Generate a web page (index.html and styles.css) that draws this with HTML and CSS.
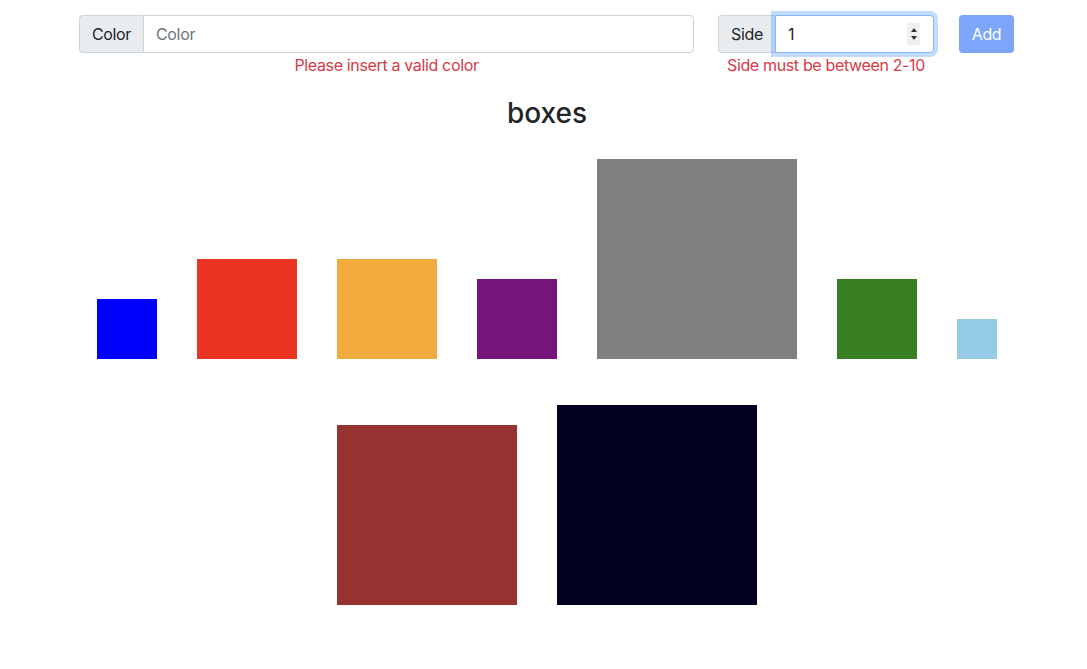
FILE: index.html
```html
<!DOCTYPE html>
<html lang="en">
<head>
<meta charset="utf-8">
<title>boxes</title>
<link rel="stylesheet" href="styles.css">
</head>
<body>
<form class="form">
  <div class="field field-color">
    <div class="input-group">
      <span class="addon">Color</span>
      <input class="control" type="text" placeholder="Color">
    </div>
    <div class="feedback">Please insert a valid color</div>
  </div>
  <div class="field field-side">
    <div class="input-group">
      <span class="addon">Side</span>
      <div class="control-wrap">
        <input class="control control-focus" type="text" value="1">
        <span class="spinner">
          <svg width="12" height="22" viewBox="0 0 12 22"><path d="M3 9 L6 5 L9 9 Z" fill="#333"/><path d="M3 13 L6 17 L9 13 Z" fill="#333"/></svg>
        </span>
      </div>
    </div>
    <div class="feedback">Side must be between 2-10</div>
  </div>
  <button class="btn" type="button" disabled>Add</button>
</form>

<main class="board">
  <h3 class="title">boxes</h3>
  <div class="boxes">
    <div class="box" style="width:60px;height:60px;background:#0000ff"></div>
    <div class="box" style="width:100px;height:100px;background:#ea3323"></div>
    <div class="box" style="width:100px;height:100px;background:#f1aa3c"></div>
    <div class="box" style="width:80px;height:80px;background:#77147b"></div>
    <div class="box" style="width:200px;height:200px;background:#808080"></div>
    <div class="box" style="width:80px;height:80px;background:#387e22"></div>
    <div class="box" style="width:40px;height:40px;background:#96cbe8"></div>
    <div class="box" style="width:180px;height:180px;background:#963330"></div>
    <div class="box" style="width:200px;height:200px;background:#000020"></div>
  </div>
</main>
</body>
</html>
```

FILE: styles.css
```css
* { box-sizing: border-box; }

body {
  margin: 0;
  font-family: Inter, "Liberation Sans", sans-serif;
  font-size: 16px;
  line-height: 1.5;
  color: #212529;
  background: #fff;
}

.form {
  display: flex;
  align-items: flex-start;
  padding-top: 15px;
  margin-left: 79px;
  letter-spacing: -0.35px;
}

.field { flex: none; min-width: 0; }
.field-color { width: 615px; }
.field-side { width: 216px; margin-left: 24px; }

.input-group {
  display: flex;
  height: 38px;
}

.addon {
  flex: none;
  display: flex;
  align-items: center;
  padding: 0 12px;
  background: #e9ecef;
  border: 1px solid #ced4da;
  border-right: none;
  border-radius: 4px 0 0 4px;
  color: #212529;
}

.control {
  flex: 1;
  min-width: 0;
  width: 100%;
  height: 38px;
  padding: 6px 12px;
  font: inherit;
  letter-spacing: inherit;
  color: #212529;
  border: 1px solid #ced4da;
  border-radius: 0 4px 4px 0;
  outline: none;
  background: #fff;
}

.control::placeholder { color: #6c757d; }

.control-wrap {
  position: relative;
  flex: 1;
  min-width: 0;
  display: flex;
}

.control-focus {
  border-color: #86b7fe;
  box-shadow: 0 0 0 4px rgba(13, 110, 253, 0.25);
}

.spinner {
  position: absolute;
  right: 14px;
  top: 8px;
  width: 13px;
  height: 22px;
  background: #efefef;
  display: flex;
  align-items: center;
  justify-content: center;
}

.feedback {
  text-align: center;
  color: #d63b48;
  font-size: 16px;
  line-height: 24px;
  white-space: nowrap;
}

.btn {
  flex: none;
  margin-left: 25px;
  width: 55px;
  height: 38px;
  border: none;
  border-radius: 4px;
  background: #7ca6fa;
  color: #fff;
  font: inherit;
  letter-spacing: inherit;
  padding: 0;
}

.board {
  width: 940px;
  margin-left: 77px;
}

.title {
  margin: 19px 0 0;
  text-align: center;
  font-size: 28px;
  font-weight: 500;
  line-height: 34px;
}

.boxes {
  margin-top: 29px;
  display: flex;
  flex-wrap: wrap;
  justify-content: center;
  align-items: flex-end;
  row-gap: 46px;
}

.box {
  margin: 0 20px;
  flex: none;
}
```
